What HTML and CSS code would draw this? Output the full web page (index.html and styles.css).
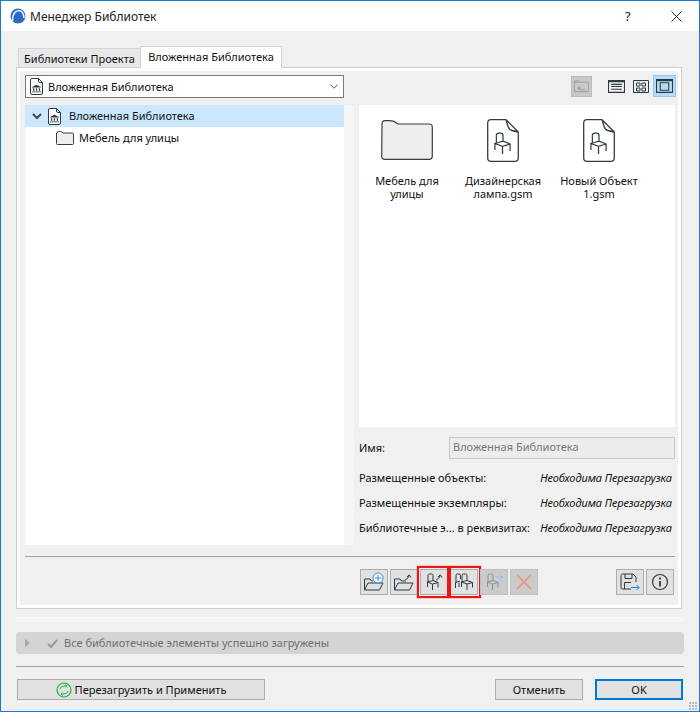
FILE: index.html
```html
<!DOCTYPE html>
<html lang="ru">
<head>
<meta charset="utf-8">
<title>Менеджер Библиотек</title>
<link rel="stylesheet" href="styles.css">
</head>
<body>
<svg class="defs" aria-hidden="true">
  <symbol id="chair" viewBox="0 0 18 24"><path d="M2.5 12V3.5Q2.500 1 5 1H7Q9.500 1 9.500 3.500V9.500M1 12L9.500 9.500L17 12.500L9 15ZM1 12V19M17 12.500V20M9 15V23" fill="none" stroke="currentColor" stroke-width="1.300"/></symbol>
  <symbol id="mini-chair" viewBox="0 0 22 20"><path d="M5 10V3.500Q5 2 6.500 2H8.500Q10 2 10 3.500V8.500M4.500 10L10 8.500L15 10.500L9.500 12ZM4.500 10V15M15 10.500V15.500M9.500 12V18" fill="none" stroke="currentColor"/></symbol>
  <symbol id="bank" viewBox="0 0 14 12"><path d="M7 0L14 3.500V4.500H0V3.500ZM1.500 5.500H3.500V9.500H1.500ZM6 5.500H8V9.500H6ZM10.500 5.500H12.500V9.500H10.500ZM0 10.500H14V12H0Z" fill="currentColor"/></symbol>
  <symbol id="doc" viewBox="0 0 13 17"><path d="M2 .5H8.500L12.500 4.500V15Q12.500 16.500 11 16.500H2Q.5 16.500 .5 15V2Q.5 .5 2 .5ZM8.500 .5V3Q8.500 4.500 10 4.500H12.500" fill="#fff" stroke="currentColor"/></symbol>
  <symbol id="bigdoc" viewBox="0 0 32 43"><path d="M4 .7H19Q20 4 21 7Q22 11 25 11.500Q29 12.500 31.300 13V39Q31.300 42.300 28 42.300H4Q.7 42.300 .7 39V4Q.7 .7 4 .7ZM19 .7L31.300 13" fill="#fff" stroke="currentColor" stroke-width="1.300"/></symbol>
</svg>
<div class="window">
  <header class="titlebar">
    <svg class="app-logo" viewBox="0 0 16 16"><circle cx="8" cy="8" r="7.500" fill="#2c6ac6"/><path d="M2.500 13Q2.500 3 9 2.500Q13.500 3 14 10" fill="none" stroke="#e6eef9" stroke-width="1.600"/></svg>
    <span class="title-text">Менеджер Библиотек</span>
    <span class="help">?</span>
    <svg class="close" viewBox="0 0 11 11"><path d="M.5 .5L10.500 10.500M10.500 .5L.5 10.500" stroke="#222" fill="none"/></svg>
  </header>
  <main class="main">
    <nav class="tabs">
      <div class="tab">Библиотеки Проекта</div>
      <div class="tab active">Вложенная Библиотека</div>
    </nav>
    <section class="panel">
      <div class="toolbar">
        <div class="select">
          <span class="doc-icon"><svg class="i-doc"><use href="#doc"/></svg><svg class="i-bank"><use href="#bank"/></svg></span>
          <span class="select-text">Вложенная Библиотека</span>
          <svg class="chev" viewBox="0 0 8 4.500"><path d="M.3 .3L4 4L7.700 .3" fill="none" stroke="#555"/></svg>
        </div>
        <div class="view-tools">
          <div class="up-btn"><svg viewBox="0 0 16 14"><path d="M.5 13V1.500H5L6.500 3H15.500V13ZM.5 3H6.500M5.500 7.500L3.800 9.500H7ZM5.500 9V11H12" fill="none" stroke="#a0a0a0"/></svg></div>
          <svg class="vw first" viewBox="0 0 16 12"><path d="M.5 .5H15.500V11.500H.5ZM3 4H13M3 6H13M3 8.500H13" fill="none" stroke="#2b3a42"/><path d="M0 0H16V2H0Z" fill="#2b3a42"/></svg>
          <svg class="vw second" viewBox="0 0 16 13"><path d="M.5 .5H15.500V12.500H.5ZM3.500 3H7V6H3.500ZM9 3H12.500V6H9ZM3.500 8H7V11H3.500ZM9 8H12.500V11H9Z" fill="none" stroke="#2b3a42"/></svg>
          <div class="vw-active"><svg viewBox="0 0 16 13"><path d="M.5 .5H15.500V12.500H.5ZM4 3.500H12V10.500H4Z" fill="none" stroke="#2b3a42"/><path d="M0 0H16V2H0Z" fill="#2b3a42"/></svg></div>
        </div>
      </div>
      <div class="columns">
        <div class="tree">
          <div class="tree-row selected">
            <svg class="twisty" viewBox="0 0 10 7"><path d="M1 1L5 5L9 1" fill="none" stroke="#3f4a52" stroke-width="2"/></svg>
            <span class="doc-icon"><svg class="i-doc"><use href="#doc"/></svg><svg class="i-bank"><use href="#bank"/></svg></span>
            <span class="tree-label">Вложенная Библиотека</span>
          </div>
          <div class="tree-row child">
            <svg class="small-folder" viewBox="0 0 18 14"><path d="M1 2Q1 .5 2.500 .5H4.500Q6 .5 7 2H16.500Q17.500 2 17.500 3V12.500Q17.500 13.500 16.500 13.500H1.500Q.5 13.500 .5 12.500V2Z" fill="#eee" stroke="#333d44"/></svg>
            <span class="tree-label">Мебель для улицы</span>
          </div>
        </div>
        <div class="splitter"></div>
        <div class="right">
          <div class="files">
            <div class="file">
              <div class="file-icon"><svg class="big-folder" viewBox="0 0 52 40"><path d="M1 4Q1 .7 4 .7H9Q13 .7 17 4H48Q51.300 4 51.300 7V36Q51.300 39.300 48 39.300H4Q.7 39.300 .7 36Z" fill="#eee" stroke="#333d44" stroke-width="1.200"/></svg></div>
              <div class="file-name">Мебель для<br>улицы</div>
            </div>
            <div class="file">
              <div class="file-icon"><span class="gsm"><svg class="i-bigdoc"><use href="#bigdoc"/></svg><svg class="i-chair"><use href="#chair"/></svg></span></div>
              <div class="file-name">Дизайнерская<br>лампа.gsm</div>
            </div>
            <div class="file">
              <div class="file-icon"><span class="gsm"><svg class="i-bigdoc"><use href="#bigdoc"/></svg><svg class="i-chair"><use href="#chair"/></svg></span></div>
              <div class="file-name">Новый Объект<br>1.gsm</div>
            </div>
          </div>
          <div class="name-row">
            <span class="name-label">Имя:</span>
            <div class="name-input">Вложенная Библиотека</div>
          </div>
          <div class="info-row"><span>Размещенные объекты:</span><em>Необходима Перезагрузка</em></div>
          <div class="info-row"><span>Размещенные экземпляры:</span><em>Необходима Перезагрузка</em></div>
          <div class="info-row"><span>Библиотечные э... в реквизитах:</span><em>Необходима Перезагрузка</em></div>
        </div>
      </div>
      <div class="panel-rule"></div>
      <div class="action-row">
        <div class="ibtn"><svg viewBox="0 0 22 20"><path d="M1.500 18V7H7L8.500 9H10M1.500 18H16.500L20 11H5L1.500 18Z" fill="none" stroke="#2b3a42"/><circle cx="15" cy="6" r="5" fill="#fff" stroke="#2f86e8"/><path d="M15 3V9M12 6H18" stroke="#2f86e8"/></svg></div>
        <div class="ibtn"><svg viewBox="0 0 22 20"><path d="M1.500 18V7H7L8.500 9H13M1.500 18H16.500L20 11H5L1.500 18Z" fill="none" stroke="#2b3a42"/><path d="M12 8Q15 7 16 4M14 5L16.200 2.800L18 5.500" fill="none" stroke="#2b3a42"/></svg></div>
        <div class="ibtn marked"><svg viewBox="0 0 22 20"><use href="#mini-chair"/><path d="M13 8Q16 7 17 4M15 5L17.200 2.800L19 5.500" fill="none" stroke="#2b3a42"/></svg></div>
        <div class="ibtn marked second-mark"><svg viewBox="0 0 22 20"><path d="M3 11V3.500Q3 2 4.500 2H6Q7.500 2 7.500 3.500V7M2.500 10.500L7 9M2.500 10.500V16M6 10.500V15M9 10V3.500Q9 2 10.500 2H12.500Q14 2 14 3.500V8.500M8.500 10L14 8.500L19.500 10.500L14 12ZM8.500 10V15M19.500 10.500V15.500M14 12V18" fill="none" stroke="#2b3a42"/></svg></div>
        <div class="ibtn off"><svg viewBox="0 0 22 20"><use href="#mini-chair"/><path d="M13 5H19.500M17.200 2.800L19.500 5L17.200 7.200" fill="none" stroke="#8fbcef"/></svg></div>
        <div class="ibtn off"><svg viewBox="0 0 22 20"><path d="M4 3L18 17M18 3L4 17" stroke="#e59a88" stroke-width="1.800" fill="none"/></svg></div>
        <div class="action-gap"></div>
        <div class="ibtn"><svg viewBox="0 0 22 20"><path d="M12 17H3.500Q2 17 2 15.500V3.500Q2 2 3.500 2H14L17 5V10M6 2V6.500H13V2M5.500 17V10.500H12" fill="none" stroke="#2b3a42"/><path d="M12 15.500H20M17.500 13L20 15.500L17.500 18" fill="none" stroke="#1f7fef"/></svg></div>
        <div class="ibtn"><svg viewBox="0 0 22 20"><circle cx="11" cy="10" r="7.500" fill="none" stroke="#2b3a42" stroke-width="1.200"/><path d="M11 9V14.500M11 5.500V7.500" stroke="#2b3a42" stroke-width="1.800"/></svg></div>
      </div>
    </section>
    <div class="strip"></div>
    <div class="status">
      <svg class="st-arrow" viewBox="0 0 5 8"><path d="M0 0L5 4L0 8Z" fill="#a6a6a6"/></svg>
      <svg class="st-check" viewBox="0 0 11 9"><path d="M1 5L4 8L10 1" fill="none" stroke="#9a9a9a" stroke-width="2"/></svg>
      <span class="status-text">Все библиотечные элементы успешно загружены</span>
    </div>
    <div class="rule"></div>
    <footer class="footer">
      <div class="btn reload">
        <svg viewBox="0 0 16 16"><circle cx="8" cy="8" r="7" fill="none" stroke="#22b24c" stroke-width="1.200"/><path d="M4 7Q5 4 8 4H10.500M9.500 2.500L11 4L9.500 5.500M12 9Q11 12 8 12H5.500M6.500 10.500L5 12L6.500 13.500" fill="none" stroke="#22b24c"/></svg>
        <span>Перезагрузить и Применить</span>
      </div>
      <div class="footer-gap"></div>
      <div class="btn cancel">Отменить</div>
      <div class="btn ok">OK</div>
      <span class="grip"></span>
    </footer>
  </main>
</div>
</body>
</html>
```

FILE: styles.css
```css
*, *::before, *::after { box-sizing: border-box; }
html, body { margin: 0; padding: 0; }
body {
  font-family: "Noto Sans", "Open Sans", sans-serif;
  font-size: 11px;
  color: #101010;
  background: #f0f0f0;
}
.defs { width: 0; height: 0; position: absolute; }
.window {
  width: 700px;
  height: 712px;
  border: 1px solid #1b7ccd;
  display: flex;
  flex-direction: column;
  background: #f0f0f0;
  overflow: hidden;
}
.titlebar {
  height: 30px;
  flex: none;
  background: #fff;
  display: flex;
  align-items: center;
  padding-left: 9px;
}
.app-logo { width: 16px; height: 16px; }
.title-text { margin-left: 4px; font-size: 12px; color: #222; flex: 1; }
.help { font-size: 13px; width: 10px; margin-right: 36px; color: #222; }
.close { width: 11px; height: 11px; margin-right: 17px; }
.main { flex: 1; position: relative; padding: 0 15px; }
.tabs { display: flex; padding-left: 2px; height: 36px; align-items: flex-end; }
.tab {
  height: 19px;
  width: 122px;
  background: #e8e8e8;
  border: 1px solid #d4d4d4;
  border-bottom: 0;
  border-right: 0;
  text-align: center;
  line-height: 20px;
}
.tab.active {
  height: 22px;
  width: 142px;
  margin-bottom: -1px;
  background: #fff;
  border-right: 1px solid #d4d4d4;
  position: relative;
  line-height: 19px;
}
.panel {
  width: 666px;
  height: 542px;
  border: 1px solid #cfcfcf;
  box-shadow: inset 0 0 0 3px #fff;
  padding: 7px 6px 0 8px;
  display: flex;
  flex-direction: column;
}
.toolbar { height: 24px; display: flex; justify-content: space-between; flex: none; }
.select {
  width: 319px;
  height: 23px;
  background: #fff;
  border: 1px solid #7a7a7a;
  display: flex;
  align-items: center;
  padding: 0 5px 0 4px;
}
.select-text { margin-left: 5px; flex: 1; }
.chev { width: 8px; height: 5px; }
.doc-icon { position: relative; width: 13px; height: 17px; display: block; color: #2b3a42; flex: none; }
.i-doc { width: 13px; height: 17px; display: block; }
.i-bank { position: absolute; left: 2px; top: 6px; width: 9px; height: 9px; }
.view-tools { display: flex; align-items: center; width: 104px; height: 22px; }
.up-btn {
  width: 21px;
  height: 21px;
  background: #c8c8c8;
  border: 1px solid #bcbcbc;
  padding: 2px;
  margin-right: 16px;
}
.up-btn svg { display: block; width: 15px; height: 14px; }
.vw { height: 13px; width: 16px; flex: none; }
.vw.first { margin-right: 8px; width: 17px; }
.vw.second { margin-right: 4px; }
.vw-active {
  width: 23px;
  height: 22px;
  background: #b8dcf8;
  border: 1px solid #8fc6f5;
  padding: 3px 2px;
}
.vw-active svg { display: block; width: 17px; height: 14px; }
.columns { display: flex; flex: none; height: 440px; margin-top: 6px; }
.tree { width: 319px; background: #fff; flex: none; }
.tree-row { height: 22px; display: flex; align-items: center; }
.tree-row.selected { background: #cce8ff; }
.twisty { width: 10px; height: 7px; margin-left: 7px; margin-right: 6px; }
.tree-label { margin-left: 8px; margin-bottom: 2px; }
.tree-row.child { padding-left: 31px; }
.tree-row.child .tree-label { margin-left: 5px; }
.small-folder { width: 18px; height: 14px; }
.splitter { width: 10px; background: #f6f6f6; flex: none; }
.right { flex: 1; padding-left: 5px; display: flex; flex-direction: column; }
.files { height: 322px; background: #fff; display: flex; padding-top: 12px; flex: none; }
.file { width: 96px; text-align: center; line-height: 13px; }
.file-icon { height: 46px; display: flex; justify-content: center; align-items: center; margin-bottom: 11px; }
.big-folder { width: 52px; height: 40px; }
.gsm { position: relative; width: 32px; height: 43px; display: block; color: #333d44; }
.i-bigdoc { width: 32px; height: 43px; display: block; }
.i-chair { position: absolute; left: 7px; top: 13px; width: 17px; height: 23px; }
.name-row { display: flex; align-items: center; height: 22px; margin-top: 10px; }
.name-label { width: 90px; margin-bottom: 2px; }
.name-input {
  flex: 1;
  height: 22px;
  border: 1px solid #c8c8c8;
  background: #ececec;
  color: #777;
  padding-left: 3px;
  line-height: 18px;
}
.info-row {
  display: flex;
  justify-content: space-between;
  height: 25px;
  line-height: 23px;
  padding-right: 3px;
}
.name-row + .info-row { margin-top: 7px; }
.info-row em { font-style: italic; letter-spacing: -.08px; }
.panel-rule { height: 1px; background: #a0a0a0; margin-top: 11px; flex: none; }
.action-row { display: flex; margin-top: 12px; gap: 2px; padding-left: 335px; height: 26px; }
.action-gap { width: 74px; flex: none; }
.ibtn {
  width: 28px;
  height: 26px;
  background: #e1e1e1;
  border: 1px solid #adadad;
  position: relative;
  display: flex;
  align-items: center;
  justify-content: center;
  flex: none;
  color: #2b3a42;
}
.ibtn svg { width: 22px; height: 20px; }
.ibtn.off { background: #cbcbcb; border-color: #bfbfbf; color: #909090; }
.ibtn.marked::after {
  content: "";
  position: absolute;
  left: -4px;
  top: -4px;
  width: 32px;
  height: 32px;
  border: 2px solid #f01414;
  box-shadow: 0 0 1px #f01414;
}
.ibtn.second-mark::after { left: -2px; }
.strip { height: 5px; width: 668px; background: #f6f6f6; margin-top: 8px; }
.status {
  margin-top: 10px;
  width: 668px;
  height: 22px;
  background: #d4d4d4;
  border-radius: 4px;
  display: flex;
  align-items: center;
  color: #6e6e6e;
  padding-left: 9px;
}
.status-text { margin-bottom: 2px; }
.st-arrow { width: 5px; height: 8px; }
.st-check { width: 11px; height: 9px; margin-left: 17px; margin-right: 6px; }
.rule { height: 1px; width: 668px; background: #a0a0a0; margin-top: 12px; }
.footer { display: flex; margin-top: 12px; height: 22px; padding-left: 1px; position: relative; width: 668px; }
.btn {
  height: 21px;
  background: #e1e1e1;
  border: 1px solid #adadad;
  text-align: center;
  line-height: 19px;
}
.reload { width: 248px; display: flex; align-items: center; justify-content: center; }
.reload svg { width: 16px; height: 16px; margin-right: 3px; }
.footer-gap { width: 230px; }
.cancel { width: 88px; margin-right: 12px; }
.ok { width: 88px; border: 2px solid #0078d7; line-height: 17px; }
.grip {
  position: absolute;
  right: -14px;
  bottom: -10px;
  width: 9px;
  height: 9px;
  background: radial-gradient(circle at 1px 1px, #bcbcbc 1px, transparent 1px) 0 0 / 3px 3px;
}
```
